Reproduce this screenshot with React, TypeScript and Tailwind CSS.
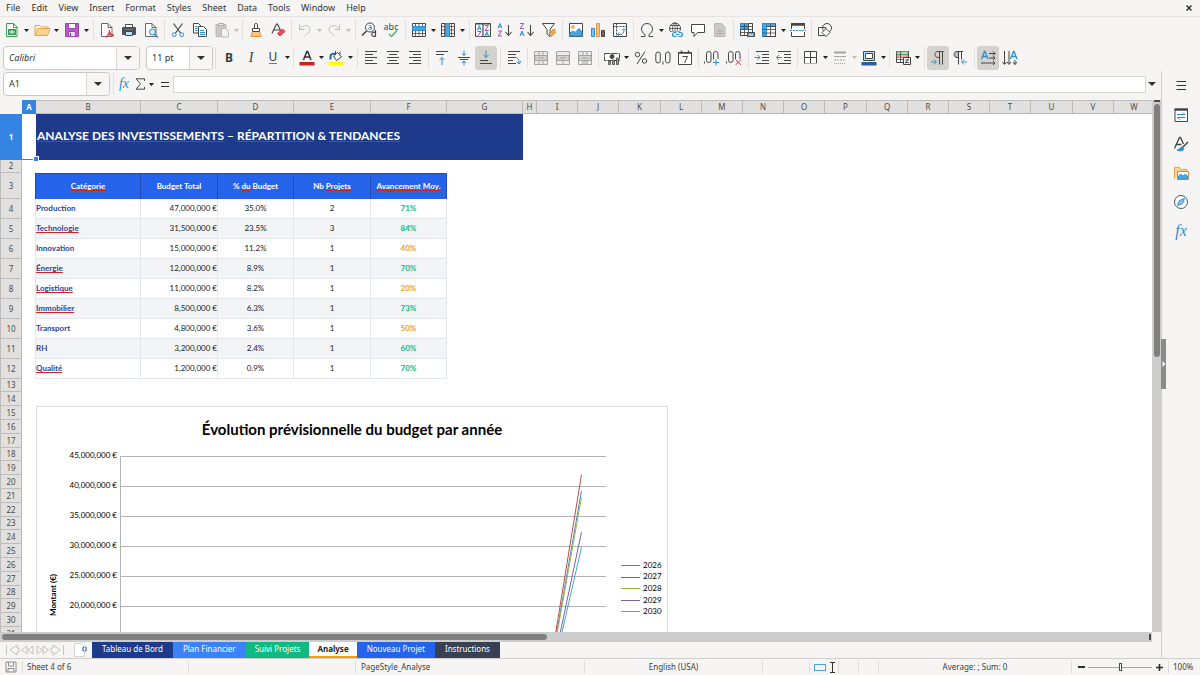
import React from "react";

type Kids = { children?: React.ReactNode };

const INK = "#464644";
const BLUE = "#2a8fd0";

/* ---------- icons ---------- */

function Ico({ children }: Kids) {
  return (
    <svg viewBox="0 0 16 16" className="size-4 shrink-0" fill="none" stroke={INK} strokeWidth="1" aria-hidden="true">
      {children}
    </svg>
  );
}

const Lines = ({ d, c = INK }: { d: string; c?: string }) => <path d={d} stroke={c} />;

const NewIcon = () => (
  <Ico>
    <path d="M2.500 1.500h7l3.500 3.500v9.500h-10.500z" fill="#fff" stroke="#3c9a58" />
    <path d="M9.500 1.500v4h4" stroke="#3c9a58" />
    <path d="M4.500 7.500h7v5h-7z" fill="#49b06a" stroke="#2f9150" />
    <path d="M5 10h6M8 8v4" stroke="#d9f2e0" />
  </Ico>
);
const OpenIcon = () => (
  <Ico>
    <path d="M1 3.500h5l1.500 1.500h6.500v3" fill="#fff" stroke="#e0a052" />
    <path d="M1 3.500v10" stroke="#e0a052" />
    <path d="M1 13.500 4 6.500h12l-2.500 7z" fill="#fbd48e" stroke="#e8a451" />
  </Ico>
);
const SaveIcon = () => (
  <Ico>
    <path d="M1.500 1.500h13v13h-13z" fill="#b85bc4" stroke="#9a45a8" />
    <path d="M4.500 1.500h7v5h-7z" fill="#fff" stroke="#9a45a8" />
    <path d="M4.500 9.500h7v5h-7z" fill="#efd9f2" stroke="#9a45a8" />
    <path d="M6.500 11v3" stroke="#6d3177" />
  </Ico>
);
const PdfIcon = () => (
  <Ico>
    <path d="M2.500 1.500h6.500l4 4v9h-10.500z" fill="#fff" stroke="#6a6a68" />
    <path d="M9 1.500v4h4" stroke="#6a6a68" />
    <path d="M10 8c1 4 3 6 5 6M10.500 8.500c0 3-1.500 5-3.500 7M8 13.500c2-1 4-1 7-.5" stroke="#e0384a" strokeWidth="1.200" />
  </Ico>
);
const PrintIcon = () => (
  <Ico>
    <path d="M4.500 2.500h7v4h-7z" fill="#fff" />
    <path d="M1.500 5.500h13v7h-13z" fill="#4b5358" stroke="#4b5358" />
    <path d="M4.500 9.500h7v4h-7z" fill="#bfe0f5" stroke="#3c4a54" />
    <path d="M4 7.500h8" stroke="#2a8fd0" />
  </Ico>
);
const PreviewIcon = () => (
  <Ico>
    <path d="M2.500 1.500h6.500l4 4v9h-10.500z" fill="#fff" stroke="#6a6a68" />
    <path d="M9 1.500v4h4" stroke="#6a6a68" />
    <circle cx="9.500" cy="10" r="3" fill="#d8ecf9" stroke={BLUE} />
    <path d="m11.500 12 3.500 3.500" stroke={BLUE} strokeWidth="1.500" />
  </Ico>
);
const CutIcon = () => (
  <Ico>
    <path d="M3.500 1.500 10.500 11M12.500 1.500 5.500 11" strokeWidth="1.200" />
    <circle cx="4.200" cy="12.700" r="1.900" stroke={BLUE} />
    <circle cx="11.800" cy="12.700" r="1.900" stroke={BLUE} />
  </Ico>
);
const CopyIcon = () => (
  <Ico>
    <path d="M1.500 1.500h5l2.500 2.500v7h-7.500z" fill="#fff" />
    <path d="M6.500 4.500h5l3 3v7h-8z" fill="#fff" />
    <path d="M3 4.500h2.500M3 6.500h2.500M3 8.500h2.500M8 8.500h4M8 10.500h5M8 12.500h5" stroke={BLUE} />
  </Ico>
);
const PasteIcon = () => (
  <Ico>
    <path d="M2 2.500h10v12h-10z" fill="#c9c9c7" stroke="#b9b9b7" />
    <path d="M4.500 1.500h5v2h-5z" fill="#eee" stroke="#b0b0ae" />
    <path d="M7.500 6.500h4l3 3v5.500h-7z" fill="#f4f4f3" stroke="#b9b9b7" />
  </Ico>
);
const BrushIcon = () => (
  <Ico>
    <path d="M6.500 6V2.500c0-1.300 3-1.300 3 0V6" fill="#fff" />
    <path d="M4.500 6.500h7v3h-7z" fill="#fff" />
    <path d="M4.500 9.500h7l1.500 5h-10z" fill="#fbc588" stroke="#e8923a" />
    <path d="M4.500 9.500h7" />
  </Ico>
);
const ClearIcon = () => (
  <Ico>
    <path d="M2 11.500 6.500 2h1L11 9.500M3.700 8h6" strokeWidth="1.200" />
    <path d="m7.500 11.500 5-4.500 2.500 2.500-5 4.500z" fill="#e8505c" stroke="#d33a48" />
  </Ico>
);
const UndoIcon = () => (
  <Ico>
    <path d="M2.500 2.500v5h5M2.500 7.500C6 1.500 13 3 13 7.500c0 3-3 4-5.500 6.500" stroke="#bfbfbd" />
  </Ico>
);
const RedoIcon = () => (
  <Ico>
    <path d="M13.500 2.500v5h-5M13.500 7.500C10 1.500 3 3 3 7.500c0 3 3 4 5.500 6.500" stroke="#bfbfbd" />
  </Ico>
);
const FindIcon = () => (
  <Ico>
    <circle cx="9" cy="5.500" r="4.500" fill="#fff" />
    <path d="M5.500 9 1 13.500" strokeWidth="1.600" />
    <path d="M7.500 4c1-.8 2.800-.5 2.800.7v2.800M10.300 5.500c-2.800 0-3 .6-2.900 1.200.1 1 2 1 2.900 0" stroke={BLUE} />
    <path d="M14.500 8v7M14.500 11c-1-1.300-3.800-1-3.800 1.300s2.800 2.600 3.800 1.200" strokeWidth="1.200" />
  </Ico>
);
const SpellIcon = () => (
  <span className="relative flex size-4 justify-center font-['Noto_Sans'] text-[9px] leading-[9px] text-[#464644]">
    abc
    <svg viewBox="0 0 16 16" className="absolute inset-0 size-4" fill="none" aria-hidden="true">
      <path d="m6 12 2.500 2.500 5.500-6" stroke="#3fb56f" strokeWidth="1.300" />
    </svg>
  </span>
);
const RowIcon = () => (
  <Ico>
    <path d="M1.500 1.500h13v13h-13z" fill="#fff" />
    <path d="M1.500 4.500h13M1.500 8.500h13M1.500 11.500h13M4.500 1.500v13M8 1.500v13M11.500 1.500v13" strokeWidth=".8" />
    <path d="M1.500 4.500h13v4h-13z" fill="#4ba3e0" stroke={BLUE} />
  </Ico>
);
const ColIcon = () => (
  <Ico>
    <path d="M1.500 1.500h13v13h-13z" fill="#fff" />
    <path d="M1.500 4.500h13M1.500 8h13M1.500 11.500h13M4.500 1.500v13M11.500 1.500v13" strokeWidth=".8" />
    <path d="M5.500 1.500h4v13h-4z" fill="#4ba3e0" stroke={BLUE} />
  </Ico>
);
const SA = ({ x, y, c = BLUE }: { x: number; y: number; c?: string }) => (
  <path d={`M${x} ${y + 5}l2-5 2 5M${x + 0.8} ${y + 3.2}h2.400`} stroke={c} />
);
const SZ = ({ x, y, c = "#a64db8" }: { x: number; y: number; c?: string }) => (
  <path d={`M${x} ${y}h3.500l-3.500 5h3.800`} stroke={c} />
);
const SortIcon = () => (
  <Ico>
    <path d="M.5 1.500h15v13h-15z" fill="#fff" />
    <path d="M.5 2h15M8 2v13" strokeWidth="1.200" />
    <SA x={2.300} y={3.500} />
    <SZ x={2.500} y={9.500} />
    <SZ x={10} y={3.500} />
    <SA x={9.800} y={9.500} />
  </Ico>
);
const AzIcon = () => (
  <Ico>
    <SA x={1} y={1.500} />
    <SZ x={1.200} y={9} />
    <path d="M11.500 3v10M8.500 10l3 3.500 3-3.500" strokeWidth="1.100" />
  </Ico>
);
const ZaIcon = () => (
  <Ico>
    <SZ x={1.200} y={1.500} />
    <SA x={1} y={9} />
    <path d="M11.500 3v10M8.500 10l3 3.500 3-3.500" strokeWidth="1.100" />
  </Ico>
);
const FilterIcon = () => (
  <Ico>
    <path d="M1.500 1.500h12l-4.500 6v7l-3-2.500v-4.500z" fill="#fff" />
    <path d="M11.500 7.500h3l-1.500 2.500h2l-5 5 1.500-4h-2z" fill="#fba74a" stroke="#ee8e28" strokeWidth=".8" />
  </Ico>
);
const ImageIcon = () => (
  <Ico>
    <path d="M1.500 1.500h13v13h-13z" fill="#fff" />
    <circle cx="5" cy="5" r="1.500" fill="#fbc26a" stroke="#e99c33" strokeWidth=".7" />
    <path d="M2 14v-3l3-2 2 1.500 4-4 3 3.500v4z" fill="#4ba3e0" stroke={BLUE} />
  </Ico>
);
const ChartIcon = () => (
  <Ico>
    <path d="M1.500 6.500h3v8h-3z" fill="#83c0ea" stroke={BLUE} />
    <path d="M6.500 1.500h3v13h-3z" fill="#fcc27c" stroke="#ed9638" />
    <path d="M11.500 8.500h3v6h-3z" fill="#6a6a68" />
  </Ico>
);
const PivotIcon = () => (
  <Ico>
    <path d="M1.500 1.500h13v13h-13z" fill="#fff" />
    <path d="M1.500 4.500h13M4.500 1.500v13" strokeDasharray="2 1" />
    <path d="M5.500 12.500h2.500c3 0 4-2 4-5M7.500 10.500l-2 2 2 2M10 8.500l2-2 2 2" stroke={BLUE} />
  </Ico>
);
const OmegaIcon = () => (
  <Ico>
    <path d="M2 14.500h4v-2C3.500 11 2.500 9 2.500 7c0-3 2-5.500 5.500-5.500s5.500 2.500 5.500 5.500c0 2-1 4-3.500 5.500v2h4" />
  </Ico>
);
const LinkIcon = () => (
  <Ico>
    <circle cx="7" cy="6.500" r="5.500" fill="#fff" />
    <path d="M1.500 6.500h11M7 1v11M2.500 3.500h9M2.500 9.500h9" strokeWidth=".8" />
    <ellipse cx="7" cy="6.500" rx="2.500" ry="5.500" strokeWidth=".8" />
    <path d="M3 9.500h13v6h-13z" fill="#f6f5f4" stroke="none" />
    <path d="M8.500 10.500h-2a2 2 0 0 0 0 4h2M10.500 10.500h2a2 2 0 0 1 0 4h-2M7.500 12.500h4" stroke={BLUE} strokeWidth="1.200" />
  </Ico>
);
const CommentIcon = () => (
  <Ico>
    <path d="M1.500 2.500h13v8h-7l-3.500 4v-4h-2.500z" fill="#fff" />
  </Ico>
);
const PageIcon = () => (
  <Ico>
    <path d="M2.500 1.500h7l3.500 3.500v9.500h-10.500z" fill="#c9c9c7" stroke="#b9b9b7" />
    <path d="M5 9h5.500M5 11.500h5.500" stroke="#a5a5a3" />
  </Ico>
);
const PrintAreaIcon = () => (
  <Ico>
    <path d="M1.500 1.500h12v12h-12z" fill="#fff" />
    <path d="M1.500 1.500h8v6h-8z" fill="#4ba3e0" stroke={BLUE} />
    <path d="M1.500 4.500h12M1.500 7.500h12M1.500 10.500h12M5.500 1.500v12M9.500 1.500v12M13.500 1.500v12" strokeWidth=".8" />
    <path d="M8.500 10.500h7v4h-7z" fill="#7f9cb3" stroke="#3c4a54" />
    <path d="M10 13h4" stroke="#fff" />
  </Ico>
);
const FreezeIcon = () => (
  <Ico>
    <path d="M1.500 1.500h13v13h-13z" fill="#fff" />
    <path d="M1.500 1.500h4v13h-4zM5.500 1.500h9v3h-9z" fill="#4ba3e0" stroke={BLUE} />
    <path d="M5.500 4.500h9M5.500 7.500h9M5.500 11h9M9.500 1.500v13M1.500 7.500h4M1.500 11h4M14.500 1.500v13M1.500 14.500h13" strokeWidth=".8" />
  </Ico>
);
const SplitIcon = () => (
  <Ico>
    <path d="M1.500 1.500h13v13h-13z" fill="#fff" />
    <path d="M1 2.500h14" strokeWidth="2.500" />
    <path d="M1.500 7v3M14.500 7v3" stroke="#fff" />
    <path d="M0 8.500h16" stroke={BLUE} strokeDasharray="2 1" />
  </Ico>
);
const ShapesIcon = () => (
  <Ico>
    <path d="M1.500 5.500h7v8h-7z" fill="#fff" />
    <circle cx="10" cy="6" r="4.500" />
    <path d="m9 6.500 4 4-4 4-4-4z" fill="#fff" />
  </Ico>
);

const BoldIcon = () => <b className="font-['Noto_Sans'] text-[12px] leading-none text-[#3a3a38]">B</b>;
const ItalicIcon = () => <i className="font-['Liberation_Serif',serif] text-[14px] leading-none text-[#3a3a38]">I</i>;
const UnderlineIcon = () => (
  <span className="border-b border-[#2a8fd0] font-['Noto_Sans'] text-[12px] leading-[12px] text-[#3a3a38]">U</span>
);
const FontColorIcon = () => (
  <Ico>
    <path d="m4.500 10 3.300-8.500h.9l3.300 8.500M5.500 7h5.500" strokeWidth="1.500" stroke="#333" />
    <path d="M.5 12h15v3.500h-15z" fill="#c9211e" stroke="none" />
  </Ico>
);
const FillIcon = () => (
  <Ico>
    <path d="m5.500 6 4-3.500 4 4.500-5 3.500z" fill="#fff" />
    <path d="M7.500 1v4M12 1.500v3" />
    <path d="M2.500 9.500V6c0-2 2-2.500 4.500-2" stroke="#2668a8" strokeWidth="2" />
    <path d="M.5 12h15v3.500h-15z" fill="#ffff00" stroke="none" />
  </Ico>
);
const LeftIcon = () => <Ico><Lines d="M2 1.500h12M2 4.500h8M2 7.500h12M2 10.500h8M2 13.500h12" /></Ico>;
const CenterIcon = () => <Ico><Lines d="M2 1.500h12M4 4.500h8M2 7.500h12M4 10.500h8M2 13.500h12" /></Ico>;
const RightIcon = () => <Ico><Lines d="M2 1.500h12M6 4.500h8M2 7.500h12M6 10.500h8M2 13.500h12" /></Ico>;
const TopIcon = () => (
  <Ico>
    <Lines d="M2 1.500h12M2 4.500h8" />
    <path d="M8 7.500v7.500M5.500 10 8 7.500l2.500 2.500" stroke={BLUE} />
  </Ico>
);
const MiddleIcon = () => (
  <Ico>
    <Lines d="M2 7.500h12M4 9.500h8" />
    <path d="M8 .5v5M6 3.500l2 2 2-2M8 15.500v-4.500M6 13l2-2 2 2" stroke={BLUE} />
  </Ico>
);
const BottomIcon = () => (
  <Ico>
    <Lines d="M2 10.500h8M2 13.500h12" />
    <path d="M8 .5v7M5.500 5 8 7.500l2.500-2.500" stroke={BLUE} />
  </Ico>
);
const WrapIcon = () => (
  <Ico>
    <Lines d="M2 1.500h12M2 4.500h8M2 7.500h7M2 10.500h5M2 13.500h8" />
    <path d="M9 7.500c3 0 4 1.500 4 6M10.500 11.500l2.500 2.500 2-3" stroke={BLUE} />
  </Ico>
);
const MergeIcon = ({ d }: { d: string }) => (
  <Ico>
    <path d="M1.500 1.500h13v13h-13z" fill="#ececea" stroke="#a5a5a3" />
    <path d={d} stroke="#a5a5a3" />
    <path d="M2 5.500h12v5h-12z" fill="#d2d2d0" stroke="#a5a5a3" />
    <path d="M5 8h6" stroke="#a5a5a3" />
  </Ico>
);
const CurrencyIcon = () => (
  <Ico>
    <path d="M.5 3.500h15v7h-15z" fill="#fff" strokeDasharray="6 1" />
    <circle cx="8" cy="6.500" r="2" fill={INK} />
    <path d="M4.500 11.500h2v3h-2zM8.500 10h2v4.500h-2zM12.500 8h2v6.500h-2z" fill="#999" strokeWidth=".8" />
  </Ico>
);
const PercentIcon = () => (
  <Ico>
    <circle cx="4.500" cy="4.500" r="2.200" />
    <circle cx="11.500" cy="11" r="2.200" />
    <path d="M12 1.500 4 14" />
  </Ico>
);
const Zero = ({ x, y = 2 }: { x: number; y?: number }) => <rect x={x} y={y} width="4.500" height="11" rx="2.200" />;
const NumberIcon = () => (
  <Ico>
    <Zero x={0.8} />
    <path d="M8 11.500v3" />
    <Zero x={10.500} />
  </Ico>
);
const DateIcon = () => (
  <Ico>
    <path d="M1.500 2.500h13v12h-13z" fill="#fff" />
    <path d="M1 3h14M4.500 .5v3M11.500 .5v3" strokeWidth="1.500" />
    <path d="M5.500 6.500h5l-3 6.500" />
  </Ico>
);
const AddDecIcon = () => (
  <Ico>
    <path d="M.5 11.500v2" />
    <Zero x={2.500} y={1.500} />
    <Zero x={9.500} y={1.500} />
    <path d="M8.500 9h8v7h-8z" fill="#f6f5f4" stroke="none" />
    <path d="M12 9.500v6M9 12.500h6" stroke={BLUE} />
  </Ico>
);
const DelDecIcon = () => (
  <Ico>
    <path d="M.5 11.500v2" />
    <Zero x={2.500} y={1.500} />
    <Zero x={9.500} y={1.500} />
    <path d="M8.500 9h8v7h-8z" fill="#f6f5f4" stroke="none" />
    <path d="m9.500 9.500 5.500 5.500M15 9.500 9.500 15" stroke="#e0384a" />
  </Ico>
);
const IndentIcon = () => (
  <Ico>
    <Lines d="M2 1.500h13M8 4.500h7M8 7.500h7M8 10.500h7M2 13.500h13" />
    <path d="M.5 7.500h5.500M3.500 5 6 7.500 3.500 10" stroke={BLUE} />
  </Ico>
);
const OutdentIcon = () => (
  <Ico>
    <Lines d="M2 1.500h13M8 4.500h7M8 7.500h7M8 10.500h7M2 13.500h13" />
    <path d="M.5 7.500h5.500M3 5 .5 7.500 3 10" stroke={BLUE} />
  </Ico>
);
const BordersIcon = () => (
  <Ico>
    <path d="M1.500 1.500h12v12h-12zM7.500 1.500v12M1.500 7.500h12" fill="#fff" />
    <path d="M1 13.500h13" stroke="#e9a55d" />
  </Ico>
);
const BorderStyleIcon = () => (
  <Ico>
    <path d="M2 2.500h12" stroke="#a5a5a3" strokeWidth="2" />
    <path d="M2 6.500h12" stroke="#a5a5a3" />
    <path d="M2 10h12" stroke="#a5a5a3" strokeDasharray="2 1" />
    <path d="M2 13.500h12" stroke="#a5a5a3" strokeDasharray="1 1" />
  </Ico>
);
const BorderColorIcon = () => (
  <Ico>
    <path d="M2.500 1.500h11v9h-11z" fill="#bcd9ef" />
    <path d="M4.500 3.500h7v5h-7z" fill="#fff" />
    <path d="M.5 12h15v3.500h-15z" fill="#2a6099" stroke="none" />
  </Ico>
);
const CondIcon = () => (
  <Ico>
    <path d="M1.500 1.500h12v11h-12z" fill="#fff" />
    <path d="M2 4.500h11v3h-11z" fill="#f5a7a1" stroke="#d9534f" strokeWidth=".8" />
    <path d="M2 1.500h11v3h-11z" fill="#a9dfb9" stroke="#3fa65f" strokeWidth=".8" />
    <path d="M2 9.500h6M5.500 1.500v11" strokeWidth=".8" />
    <path d="M8.500 7.500h7v7h-7z" fill="#fff" />
    <path d="M10 10h4M10 12.500h4M13.500 8.500l-3 5" strokeWidth=".9" />
  </Ico>
);
const LtrIcon = () => (
  <Ico>
    <path d="M13.500 1.500H8c-4 0-4 6 0 6h1M9.500 1.500v13M12.500 1.500v13" />
    <path d="M1 12h5M4 9.500 6.500 12 4 14.500" stroke={BLUE} />
  </Ico>
);
const RtlIcon = () => (
  <Ico>
    <path d="M6.500 1.500H5c-4 0-4 6 0 6h1.500z" fill="#bbb" />
    <path d="M11 1.500H5M6.500 1.500v13M9.500 1.500v8" />
    <path d="M15 12h-5M12 9.500 9.500 12l2.500 2.500" stroke={BLUE} />
  </Ico>
);
const TextLtrIcon = () => (
  <Ico>
    <path d="m1.500 9 3-7.500h.5l3 7.500M2.500 6.500h4.500" stroke={BLUE} strokeWidth="1.300" />
    <path d="M9 3.500h6M13 1.500l2 2-2 2M9 8h6M13 6l2 2-2 2M1 13h14M13 11l2 2-2 2" />
  </Ico>
);
const TextTtbIcon = () => (
  <Ico>
    <path d="m8.500 9 3-7.500h.5l3 7.500M9.500 6.500h4.500" stroke={BLUE} strokeWidth="1.300" />
    <path d="M2.500 1v13M.5 12l2 2.500 2-2.500M7 1v13M5 12l2 2.500 2-2.500M13 10v4.500M11 12l2 2.500 2-2.500" />
  </Ico>
);

/* ---------- tool bar parts ---------- */

const Caret = ({ dim = false }: { dim?: boolean }) => (
  <svg viewBox="0 0 5 3" className="h-[3px] w-[5px] shrink-0" aria-hidden="true">
    <path d="M0 0h5L2.500 3z" fill={dim ? "#bcbcba" : "#1f1f1e"} />
  </svg>
);

const Sep = ({ wide = false }: { wide?: boolean }) => (
  <span className={wide ? "flex w-1.5 shrink-0 justify-center" : "flex w-[5px] shrink-0 justify-center"}>
    <span className="h-[22px] w-px bg-[#e2e1df]" />
  </span>
);

function Tool({ label, active = false, children }: Kids & { label: string; active?: boolean }) {
  return (
    <button
      type="button"
      aria-label={label}
      className={
        active
          ? "flex h-6 w-[22px] shrink-0 items-center justify-center rounded-[3px] bg-[#d5d1cd]"
          : "flex h-6 w-[22px] shrink-0 items-center justify-center"
      }
    >
      {children}
    </button>
  );
}

function SplitTool({ label, dim = false, children }: Kids & { label: string; dim?: boolean }) {
  return (
    <span className="flex shrink-0 items-center">
      <Tool label={label}>{children}</Tool>
      <button type="button" aria-label={`${label} options`} className="flex h-6 w-[7px] items-center justify-center">
        <Caret dim={dim} />
      </button>
    </span>
  );
}

function Combo({ label, value, size, italic = false }: { label: string; value: string; size: string; italic?: boolean }) {
  return (
    <div className={`${size} flex h-6 shrink-0 overflow-hidden rounded-[4px] border border-[#cdc7c2] bg-white`}>
      <input
        aria-label={label}
        defaultValue={value}
        className={italic ? "w-0 min-w-0 flex-1 px-[5px] text-[9px] italic outline-none" : "w-0 min-w-0 flex-1 px-[5px] text-[9px] outline-none"}
      />
      <button
        type="button"
        aria-label={`${label} list`}
        className="flex w-[23px] items-center justify-center border-l border-[#d9d5d1] bg-[#f7f6f5]"
      >
        <svg viewBox="0 0 8 4" className="h-1 w-2" aria-hidden="true">
          <path d="M0 0h8L4 4z" fill="#2e3436" />
        </svg>
      </button>
    </div>
  );
}

/* ---------- sheet data ---------- */

const MENUS = ["File", "Edit", "View", "Insert", "Format", "Styles", "Sheet", "Data", "Tools", "Window", "Help"];

const COLUMNS: [string, string][] = [
  ["A", "w-3.5"],
  ["B", "w-[105px]"],
  ["C", "w-[77px]"],
  ["D", "w-[76px]"],
  ["E", "w-[77px]"],
  ["F", "w-[76px]"],
  ["G", "w-[76px]"],
  ["H", "w-3.5"],
  ..."IJKLMNOPQRSTUVW".split("").map((c, i): [string, string] => [c, i % 5 === 2 ? "w-[42px]" : "w-[41px]"]),
];

type Row = { name: string; typo?: boolean; budget: string; share: string; count: string; progress: string; good: boolean };

const ROWS: Row[] = [
  { name: "Production", budget: "47,000,000 €", share: "35.0%", count: "2", progress: "71%", good: true },
  { name: "Technologie", typo: true, budget: "31,500,000 €", share: "23.5%", count: "3", progress: "84%", good: true },
  { name: "Innovation", budget: "15,000,000 €", share: "11.2%", count: "1", progress: "40%", good: false },
  { name: "Énergie", typo: true, budget: "12,000,000 €", share: "8.9%", count: "1", progress: "70%", good: true },
  { name: "Logistique", typo: true, budget: "11,000,000 €", share: "8.2%", count: "1", progress: "20%", good: false },
  { name: "Immobilier", typo: true, budget: "8,500,000 €", share: "6.3%", count: "1", progress: "73%", good: true },
  { name: "Transport", budget: "4,800,000 €", share: "3.6%", count: "1", progress: "50%", good: false },
  { name: "RH", budget: "3,200,000 €", share: "2.4%", count: "1", progress: "60%", good: true },
  { name: "Qualité", typo: true, budget: "1,200,000 €", share: "0.9%", count: "1", progress: "70%", good: true },
];

const BLANK_ROWS = Array.from({ length: 19 }, (_, i) => i + 13);

const Typo = ({ children }: Kids) => (
  <span className="underline decoration-[#e01b24] decoration-solid decoration-1 underline-offset-1 [text-decoration-skip-ink:none]">
    {children}
  </span>
);

function RowHead({ n, height, active = false }: { n: number; height: string; active?: boolean }) {
  return (
    <th
      scope="row"
      className={
        active
          ? `${height} border-b border-[#3584e4] bg-[#3584e4] p-0 text-center font-['Noto_Sans'] text-[8px] leading-none font-bold text-white`
          : `${height} border-r border-b border-l border-[#bdbcba] bg-[#e1e0de] p-0 text-center font-['Noto_Sans'] text-[8px] leading-none font-normal text-[#4c4c4a]`
      }
    >
      {n}
    </th>
  );
}

const HEAD_CELL =
  "border-t border-r border-[#1d4bb8] bg-[#2563eb] p-0 pb-0.5 text-center text-[8px] leading-none font-bold text-white";
const CELL = "border-r border-b border-[#e3e6ea] p-0 pb-px text-[8px] leading-none";

function Sheet() {
  return (
    <table className="w-px table-fixed border-separate border-spacing-0 whitespace-nowrap">
      <colgroup>
        <col className="w-[22px]" />
        {COLUMNS.map(([c, w]) => (
          <col key={c} className={w} />
        ))}
      </colgroup>
      <thead>
        <tr>
          <td className="h-3.5 bg-[#f6f5f4] p-0" />
          {COLUMNS.map(([c]) => (
            <th
              key={c}
              scope="col"
              className={
                c === "A"
                  ? "border-b border-[#3584e4] bg-[#3584e4] p-0 text-center font-['Noto_Sans'] text-[8px] leading-none font-bold text-white"
                  : "border-t border-r border-b border-[#bdbcba] bg-[#e1e0de] p-0 text-center font-['Noto_Sans'] text-[8px] leading-none font-normal text-[#4c4c4a]"
              }
            >
              {c}
            </th>
          ))}
        </tr>
      </thead>
      <tbody>
        <tr>
          <RowHead n={1} height="h-[46px]" active />
          <td className="relative border-b border-[#3584e4] p-0">
            <span className="absolute -right-0.5 -bottom-0.5 size-1 bg-[#3584e4] ring-1 ring-white" />
          </td>
          <td colSpan={6} className="bg-[#1e3a8a] p-0 pb-0.5 pl-px text-[12px] leading-none font-bold text-white">
            <Typo>ANALYSE</Typo> <Typo>DES</Typo> <Typo>INVESTISSEMENTS</Typo> – <Typo>RÉPARTITION</Typo> &amp;{" "}
            <Typo>TENDANCES</Typo>
          </td>
        </tr>
        <tr>
          <RowHead n={2} height="h-[13px]" />
        </tr>
        <tr>
          <RowHead n={3} height="h-[26px]" />
          <td className="border-r border-[#1d4bb8] p-0" />
          <th scope="col" className={HEAD_CELL}>
            <Typo>Catégorie</Typo>
          </th>
          <th scope="col" className={HEAD_CELL}>
            Budget Total
          </th>
          <th scope="col" className={HEAD_CELL}>
            % <Typo>du</Typo> Budget
          </th>
          <th scope="col" className={HEAD_CELL}>
            Nb <Typo>Projets</Typo>
          </th>
          <th scope="col" className={HEAD_CELL}>
            <Typo>Avancement</Typo> <Typo>Moy.</Typo>
          </th>
        </tr>
        {ROWS.map((r, i) => (
          <tr key={r.name} className={i % 2 ? "bg-[#f3f4f6]" : "bg-white"}>
            <RowHead n={i + 4} height="h-5" />
            <td className="border-r border-[#e3e6ea] bg-white p-0" />
            <td className={`${CELL} text-left font-bold text-[#2c4595]`}>{r.typo ? <Typo>{r.name}</Typo> : r.name}</td>
            <td className={`${CELL} text-right text-[#222]`}>{r.budget}</td>
            <td className={`${CELL} text-center text-[#222]`}>{r.share}</td>
            <td className={`${CELL} text-center text-[#222]`}>{r.count}</td>
            <td
              className={
                r.good ? `${CELL} text-center font-bold text-[#10b981]` : `${CELL} text-center font-bold text-[#f59e0b]`
              }
            >
              {r.progress}
            </td>
            <td colSpan={17} className="bg-white p-0" />
          </tr>
        ))}
        {BLANK_ROWS.map((n) => (
          <tr key={n}>
            <RowHead n={n} height={n % 5 === 3 ? "h-[13px]" : "h-3.5"} />
          </tr>
        ))}
      </tbody>
    </table>
  );
}

/* ---------- chart ---------- */

const SERIES = [
  { year: "2026", total: 39.2, color: "#4a86c5" },
  { year: "2027", total: 41.9, color: "#be4b48" },
  { year: "2028", total: 38.1, color: "#98b954" },
  { year: "2029", total: 32.3, color: "#7d60a0" },
  { year: "2030", total: 29.8, color: "#46aac5" },
];
const TICKS = [45, 40, 35, 30, 25, 20];
const yOf = (millions: number) => 320 - millions * 6;

function Chart() {
  return (
    <svg
      viewBox="0 0 632 360"
      className="absolute top-[306px] left-9 h-[360px] w-[632px] font-['Lato',sans-serif] text-[8px]"
      role="img"
      aria-label="Évolution prévisionnelle du budget par année"
    >
      <rect x="0.5" y="0.5" width="631" height="359" fill="#fff" stroke="#dedede" />
      <text x="316" y="29" textAnchor="middle" className="text-[15px] font-bold">
        Évolution prévisionnelle du budget par année
      </text>
      {TICKS.map((t) => (
        <g key={t}>
          <path d={`M84 ${yOf(t) + 0.5}H570`} stroke="#b3b3b3" />
          <text x="81" y={yOf(t) + 2} textAnchor="end">
            {`${t},000,000 €`}
          </text>
        </g>
      ))}
      <path d="M84.500 50V320" stroke="#b3b3b3" />
      <text x="20" y="189" textAnchor="middle" transform="rotate(-90 20 189)" className="font-bold">
        Montant (€)
      </text>
      {SERIES.map((s) => (
        <path key={s.year} d={`M504.500 320L545.500 ${yOf(s.total)}`} stroke={s.color} fill="none" />
      ))}
      {SERIES.map((s, i) => (
        <g key={s.year}>
          <path d={`M585 ${[159.5, 171.5, 182.5, 194.5, 205.5][i]}h19`} stroke={s.color} />
          <text x="607" y={[162, 173, 185, 197, 208][i]}>
            {s.year}
          </text>
        </g>
      ))}
    </svg>
  );
}

/* ---------- side bar ---------- */

function SideButton({ label, children }: Kids & { label: string }) {
  return (
    <button type="button" aria-label={label} className="flex h-[29px] w-8 items-center justify-center">
      {children}
    </button>
  );
}

function SideBar() {
  return (
    <aside className="relative flex w-[39px] shrink-0 flex-col items-center border-l border-[#d0cfcd]">
      <SideButton label="Sidebar settings">
        <Ico>
          <path d="M3.500 3.500h9.500M3.500 7.500h9.500M3.500 11.500h9.500" stroke="#2e3436" strokeWidth="1.200" />
        </Ico>
      </SideButton>
      <SideButton label="Properties">
        <Ico>
          <path d="M2 2.500h12.500v12h-12.500z" fill="#fff" />
          <path d="M1.500 2.500h13.500" strokeWidth="2.500" />
          <path d="M4 7.500h8M10 5.500l2 2M4.500 10.500h8M6.500 12.500l-2-2" stroke={BLUE} />
        </Ico>
      </SideButton>
      <SideButton label="Styles">
        <Ico>
          <path d="M1.500 12.500 6.500 1.500h1l3 6.500M3.500 8.500h5" strokeWidth="1.300" />
          <path d="m15 6-6 6" strokeWidth="1.500" />
          <path d="M9.500 11c-2 0-2.500 2.500-5.500 3 2.500 1.500 6.500 1 7-1.500" fill={BLUE} stroke={BLUE} />
        </Ico>
      </SideButton>
      <SideButton label="Gallery">
        <Ico>
          <path d="M1.500 13.500v-11h5l1 2h6.500v3" fill="#fbd48e" stroke="#e8a451" />
          <path d="M4.500 6.500h11v8h-11z" fill="#fff" stroke="#d78b3a" />
          <path d="M5 14v-2.500l3-2.500 2 2 2.500-2 2.500 2.500v2.500z" fill="#4ba3e0" stroke={BLUE} strokeWidth=".7" />
        </Ico>
      </SideButton>
      <SideButton label="Navigator">
        <Ico>
          <circle cx="8" cy="8" r="6.500" fill="#fff" stroke="#4a5a66" />
          <path d="m11.500 4.500-2 5-5 2 2-5z" fill="#8cc6ee" stroke={BLUE} />
        </Ico>
      </SideButton>
      <SideButton label="Functions">
        <i className="font-['Liberation_Serif',serif] text-[16px] leading-none text-[#2a8fd0]">fx</i>
      </SideButton>
      <button
        type="button"
        aria-label="Collapse sidebar"
        className="absolute top-[268px] -left-px flex h-[50px] w-[5px] items-center justify-center bg-[#8b8b89]"
      >
        <svg viewBox="0 0 4 6" className="h-1.5 w-1" aria-hidden="true">
          <path d="M.5 0v6l3-3z" fill="#fff" />
        </svg>
      </button>
    </aside>
  );
}

/* ---------- bottom bars ---------- */

const TABS = [
  { name: "Tableau de Bord", style: "bg-[#1e3a8a] px-2.5 text-white" },
  { name: "Plan Financier", style: "bg-[#3b82f6] px-2.5 text-white" },
  { name: "Suivi Projets", style: "bg-[#10b981] px-[9px] text-white" },
  { name: "Analyse", style: "bg-white px-2 font-bold text-[#222] shadow-[inset_0_-2px_0_#f59e0b]" },
  { name: "Nouveau Projet", style: "bg-[#2563eb] px-2.5 text-white" },
  { name: "Instructions", style: "bg-[#374151] px-2.5 text-white" },
];

const NAV = [
  { label: "First sheet", d: "M1.500 2v10M12 2 5 7l7 5v-3h2V5h-2z" },
  { label: "Previous sheet", d: "M7 3 1.500 7 7 11zM13 3 7.500 7l5.500 4z" },
  { label: "Next sheet", d: "M2 3l5.500 4L2 11zM8 3l5.500 4L8 11z" },
  { label: "Last sheet", d: "M13.500 2v10M3 2l7 5-7 5V9H1V5h2z" },
];

function SheetTabs() {
  return (
    <div className="flex h-4 shrink-0 items-stretch overflow-hidden pl-[5px] text-[8px]">
      {NAV.map((n) => (
        <button key={n.label} type="button" aria-label={n.label} className="flex w-[15px] items-center justify-center">
          <svg viewBox="0 0 15 14" className="h-3.5 w-[15px]" fill="none" stroke="#c4c3c1" aria-hidden="true">
            <path d={n.d} />
          </svg>
        </button>
      ))}
      <button type="button" aria-label="Add sheet" className="mr-1 ml-2 flex w-[15px] items-center justify-center">
        <svg viewBox="0 0 15 14" className="h-3.5 w-[15px]" fill="none" aria-hidden="true">
          <path d="M1.500 .5h7l3 3v10h-10z" fill="#fff" stroke="#d5d4d2" />
          <circle cx="11.500" cy="6" r="2.500" fill="#2f6fae" />
          <path d="M9.500 6h4M11.500 4v4" stroke="#fff" />
        </svg>
      </button>
      {TABS.map((t) => (
        <button key={t.name} type="button" className={`${t.style} flex items-center justify-center pb-0.5 whitespace-nowrap`}>
          {t.name}
        </button>
      ))}
    </div>
  );
}

const Rule = () => <span className="h-3 w-px shrink-0 bg-[#dddcda]" />;

function StatusBar() {
  return (
    <footer className="flex h-[17px] shrink-0 items-center border-t border-[#cfcecc] text-[8px] text-[#3d3d3b]">
      <span className="flex w-[22px] justify-center">
        <svg viewBox="0 0 12 12" className="size-3" fill="none" stroke="#8c8c8a" aria-label="Document saved">
          <path d="M1 1h10v10h-10zM3.500 1v4h5V1M3 11V7.500h6V11" />
        </svg>
      </span>
      <Rule />
      <span className="w-[165px] pl-1">Sheet 4 of 6</span>
      <Rule />
      <span className="w-[166px]" />
      <Rule />
      <span className="w-[228px] pl-[5px]">PageStyle_Analyse</span>
      <Rule />
      <span className="flex-1 text-center">English (USA)</span>
      <Rule />
      <span className="w-[46px]" />
      <Rule />
      <span className="flex w-7 items-center justify-center gap-1">
        <span className="h-[7px] w-3 border border-[#4ba3e0]" />
        <svg viewBox="0 0 5 11" className="h-[11px] w-[5px]" fill="none" stroke="#333" aria-hidden="true">
          <path d="M0 .5h5M2.500 .5v10M0 10.500h5" />
        </svg>
      </span>
      <Rule />
      <span className="w-[19px]" />
      <Rule />
      <span className="w-[19px]" />
      <Rule />
      <span className="w-48 text-center">Average: ; Sum: 0</span>
      <Rule />
      <button type="button" aria-label="Zoom out" className="ml-1.5 flex w-2 items-center">
        <span className="h-0.5 w-[7px] bg-[#2e2e2c]" />
      </button>
      <input
        type="range"
        aria-label="Zoom"
        min="0"
        max="100"
        defaultValue="50"
        className="mx-0.5 h-2 w-16 appearance-none bg-[linear-gradient(#a8a7a5,#a8a7a5)] bg-[length:100%_1px] bg-center bg-no-repeat [&::-webkit-slider-thumb]:h-2 [&::-webkit-slider-thumb]:w-[3px] [&::-webkit-slider-thumb]:appearance-none [&::-webkit-slider-thumb]:border [&::-webkit-slider-thumb]:border-[#4a4a48] [&::-webkit-slider-thumb]:bg-white"
      />
      <button type="button" aria-label="Zoom in" className="mr-[5px] ml-0.5 flex w-[7px] items-center">
        <svg viewBox="0 0 7 7" className="size-[7px]" aria-hidden="true">
          <path d="M3.500 0v7M0 3.500h7" stroke="#2e2e2c" strokeWidth="1.600" />
        </svg>
      </button>
      <Rule />
      <span className="w-[31px] pl-1">100%</span>
    </footer>
  );
}

/* ---------- page ---------- */

export default function App() {
  return (
    <div className="flex h-screen flex-col overflow-hidden bg-[#f6f5f4] font-['Noto_Sans',sans-serif] text-[9px] text-[#2e3436]">
      <nav aria-label="Menu" className="flex h-[17px] shrink-0 items-center gap-[11px] border-b border-[#e6e5e3] pl-1.5">
        {MENUS.map((m) => (
          <button key={m} type="button">
            {m}
          </button>
        ))}
        <button type="button" aria-label="Close document" className="mr-2 ml-auto">
          <svg viewBox="0 0 6 6" className="size-1.5" aria-hidden="true">
            <path d="m.5.5 5 5M5.500.5l-5 5" stroke="#2e3436" strokeWidth="1.500" />
          </svg>
        </button>
      </nav>

      <div role="toolbar" aria-label="Standard" className="flex h-[27px] shrink-0 items-center pb-px pl-px">
        <div className="flex gap-px pr-px">
          <SplitTool label="New"><NewIcon /></SplitTool>
          <SplitTool label="Open"><OpenIcon /></SplitTool>
          <SplitTool label="Save"><SaveIcon /></SplitTool>
        </div>
        <Sep />
        <Tool label="Export as PDF"><PdfIcon /></Tool>
        <Tool label="Print"><PrintIcon /></Tool>
        <Tool label="Print preview"><PreviewIcon /></Tool>
        <Sep />
        <Tool label="Cut"><CutIcon /></Tool>
        <Tool label="Copy"><CopyIcon /></Tool>
        <SplitTool label="Paste" dim><PasteIcon /></SplitTool>
        <Sep />
        <Tool label="Clone formatting"><BrushIcon /></Tool>
        <Tool label="Clear formatting"><ClearIcon /></Tool>
        <Sep />
        <SplitTool label="Undo" dim><UndoIcon /></SplitTool>
        <SplitTool label="Redo" dim><RedoIcon /></SplitTool>
        <Sep wide />
        <Tool label="Find and replace"><FindIcon /></Tool>
        <Tool label="Spelling"><SpellIcon /></Tool>
        <Sep wide />
        <SplitTool label="Row"><RowIcon /></SplitTool>
        <SplitTool label="Column"><ColIcon /></SplitTool>
        <Sep wide />
        <Tool label="Sort"><SortIcon /></Tool>
        <Tool label="Sort ascending"><AzIcon /></Tool>
        <Tool label="Sort descending"><ZaIcon /></Tool>
        <Tool label="AutoFilter"><FilterIcon /></Tool>
        <Sep />
        <Tool label="Image"><ImageIcon /></Tool>
        <Tool label="Chart"><ChartIcon /></Tool>
        <Tool label="Pivot table"><PivotIcon /></Tool>
        <Sep />
        <SplitTool label="Special character"><OmegaIcon /></SplitTool>
        <Tool label="Hyperlink"><LinkIcon /></Tool>
        <Tool label="Comment"><CommentIcon /></Tool>
        <Tool label="Headers and footers"><PageIcon /></Tool>
        <Sep />
        <Tool label="Print area"><PrintAreaIcon /></Tool>
        <SplitTool label="Freeze rows and columns"><FreezeIcon /></SplitTool>
        <Tool label="Split window"><SplitIcon /></Tool>
        <Sep />
        <Tool label="Draw functions"><ShapesIcon /></Tool>
      </div>

      <div role="toolbar" aria-label="Formatting" className="flex h-[27px] shrink-0 items-center pl-[3px]">
        <Combo label="Font name" value="Calibri" size="w-[137px]" italic />
        <span className="w-1.5 shrink-0" />
        <Combo label="Font size" value="11 pt" size="w-[67px]" />
        <Sep />
        <Tool label="Bold"><BoldIcon /></Tool>
        <Tool label="Italic"><ItalicIcon /></Tool>
        <SplitTool label="Underline"><UnderlineIcon /></SplitTool>
        <Sep />
        <SplitTool label="Font color"><FontColorIcon /></SplitTool>
        <SplitTool label="Background color"><FillIcon /></SplitTool>
        <Sep wide />
        <Tool label="Align left"><LeftIcon /></Tool>
        <Tool label="Center horizontally"><CenterIcon /></Tool>
        <Tool label="Align right"><RightIcon /></Tool>
        <Sep />
        <Tool label="Align top"><TopIcon /></Tool>
        <Tool label="Center vertically"><MiddleIcon /></Tool>
        <Tool label="Align bottom" active><BottomIcon /></Tool>
        <Sep wide />
        <Tool label="Wrap text"><WrapIcon /></Tool>
        <Sep />
        <Tool label="Merge and center"><MergeIcon d="M6 1.500v4M10 1.500v4M6 10.500v4M10 10.500v4" /></Tool>
        <Tool label="Merge cells"><MergeIcon d="M8 10.500v4" /></Tool>
        <Tool label="Unmerge cells"><MergeIcon d="M6 1.500v13M10 1.500v13M8 10.500v4" /></Tool>
        <Sep />
        <SplitTool label="Currency"><CurrencyIcon /></SplitTool>
        <Tool label="Percent"><PercentIcon /></Tool>
        <Tool label="Number"><NumberIcon /></Tool>
        <Tool label="Date"><DateIcon /></Tool>
        <Sep />
        <Tool label="Add decimal place"><AddDecIcon /></Tool>
        <Tool label="Delete decimal place"><DelDecIcon /></Tool>
        <Sep wide />
        <Tool label="Increase indent"><IndentIcon /></Tool>
        <Tool label="Decrease indent"><OutdentIcon /></Tool>
        <Sep />
        <SplitTool label="Borders"><BordersIcon /></SplitTool>
        <SplitTool label="Border style" dim><BorderStyleIcon /></SplitTool>
        <SplitTool label="Border color"><BorderColorIcon /></SplitTool>
        <Sep />
        <SplitTool label="Conditional formatting"><CondIcon /></SplitTool>
        <Sep wide />
        <Tool label="Left to right" active><LtrIcon /></Tool>
        <Tool label="Right to left"><RtlIcon /></Tool>
        <Sep wide />
        <Tool label="Text left to right" active><TextLtrIcon /></Tool>
        <Tool label="Text top to bottom"><TextTtbIcon /></Tool>
      </div>

      <div className="flex min-h-0 flex-1">
        <main className="flex min-w-0 flex-1 flex-col">
          <div className="flex h-[29px] shrink-0 items-center pb-[3px] pl-[3px]">
            <Combo label="Name box" value="A1" size="w-[107px]" />
            <Sep wide />
            <button type="button" aria-label="Function wizard" className="w-4 font-['Liberation_Serif',serif] text-[14px] leading-none text-[#2a8fd0] italic">
              fx
            </button>
            <button type="button" aria-label="Select function" className="flex w-6 items-center gap-1 pl-[3px]">
              <svg viewBox="0 0 10 12" className="h-3 w-2.5 shrink-0" fill="none" stroke={INK} aria-hidden="true">
                <path d="M9.500 3V.8H1l4.500 5L1 11.200h8.500V9" />
              </svg>
              <Caret />
            </button>
            <button type="button" aria-label="Formula" className="flex w-[17px] flex-col items-center gap-[3px]">
              <span className="h-px w-2 bg-[#333]" />
              <span className="h-px w-2 bg-[#333]" />
            </button>
            <input aria-label="Formula input" className="h-[17px] min-w-0 flex-1 border border-[#d8d6d3] bg-white px-1 outline-none" />
            <button type="button" aria-label="Expand formula bar" className="mr-[3px] flex w-3 justify-center">
              <svg viewBox="0 0 8 4" className="h-1 w-2" aria-hidden="true">
                <path d="M0 0h8L4 4z" fill="#2e3436" />
              </svg>
            </button>
          </div>
          <div className="flex min-h-0 flex-1">
            <div className="relative min-w-0 flex-1 overflow-hidden bg-white font-['Lato',sans-serif]">
              <Sheet />
              <Chart />
            </div>
            <div className="flex w-[9px] shrink-0 flex-col items-center bg-[#cdcdcd]">
              <span className="h-0.5 w-1.5 bg-[#4c4c4a]" />
              <span className="mt-0.5 h-[253px] w-1.5 rounded-full bg-[#7f807f]" />
            </div>
          </div>
          <div className="flex h-2.5 shrink-0 pr-[9px]">
            <div className="flex flex-1 items-center bg-[#cdcdcd] pl-0.5">
              <span className="h-1.5 w-[545px] rounded-full bg-[#7f807f]" />
              <span className="mr-px ml-auto h-1.5 w-0.5 bg-[#4c4c4a]" />
            </div>
          </div>
          <SheetTabs />
        </main>
        <SideBar />
      </div>

      <StatusBar />
    </div>
  );
}
